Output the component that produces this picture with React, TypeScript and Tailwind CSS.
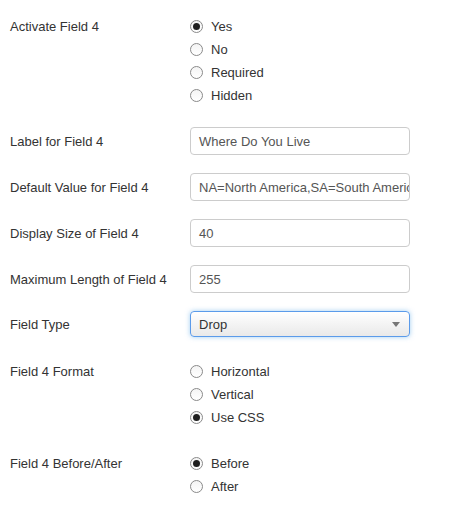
import React from 'react'

type RadioOption = { label: string, checked?: boolean }

function Radio({ label, checked }: RadioOption) {
  return (
    <div className="h-[23px] flex items-center gap-[8px]">
      <span className="w-[13px] h-[13px] rounded-full border border-[#8a8a8a] bg-gradient-to-b from-[#f4f4f4] to-white flex items-center justify-center shrink-0">
        {checked && <span className="w-[7px] h-[7px] rounded-full bg-[#1f1f1f]" />}
      </span>
      <span>{label}</span>
    </div>
  )
}

function RadioRow({ label, options, className }: { label: string, options: RadioOption[], className?: string }) {
  return (
    <div className={`flex ${className ?? ''}`}>
      <div className="w-[180px] h-[23px] flex items-center shrink-0">{label}</div>
      <div className="flex flex-col">
        {options.map((o, idx) => (
          <Radio key={idx} label={o.label} checked={o.checked} />
        ))}
      </div>
    </div>
  )
}

function InputRow({ label, value, className }: { label: string, value: string, className?: string }) {
  return (
    <div className={`flex items-center ${className ?? ''}`}>
      <div className="w-[180px] shrink-0">{label}</div>
      <div className="w-[220px] h-[28px] border border-[#cccccc] rounded-[4px] bg-white px-[8px] flex items-center overflow-hidden whitespace-nowrap text-[#555555]">
        {value}
      </div>
    </div>
  )
}

export default function App() {
  return (
    <div className="w-[463px] h-[514px] bg-white pl-[10px] pt-[15px] text-[13px] text-[#333333] font-['Liberation_Sans',Arial,sans-serif] leading-[15px]">
      <RadioRow
        label="Activate Field 4"
        options={[
          { label: 'Yes', checked: true },
          { label: 'No' },
          { label: 'Required' },
          { label: 'Hidden' },
        ]}
      />
      <InputRow className="mt-[20px]" label="Label for Field 4" value="Where Do You Live" />
      <InputRow className="mt-[18px]" label="Default Value for Field 4" value="NA=North America,SA=South America" />
      <InputRow className="mt-[18px]" label="Display Size of Field 4" value="40" />
      <InputRow className="mt-[18px]" label="Maximum Length of Field 4" value="255" />

      <div className="flex items-center mt-[18px]">
        <div className="w-[180px] shrink-0">Field Type</div>
        <div className="w-[220px] h-[26px] border border-[#5b9bea] rounded-[4px] bg-gradient-to-b from-white to-[#e9e9e9] shadow-[0_0_5px_rgba(102,175,233,0.6)] pl-[8px] pr-[9px] flex items-center justify-between">
          <span>Drop</span>
          <svg width="8" height="5" viewBox="0 0 8 5">
            <path d="M0 0 L8 0 L4 5 Z" fill="#777777" />
          </svg>
        </div>
      </div>

      <RadioRow
        className="mt-[23px]"
        label="Field 4 Format"
        options={[
          { label: 'Horizontal' },
          { label: 'Vertical' },
          { label: 'Use CSS', checked: true },
        ]}
      />
      <RadioRow
        className="mt-[23px]"
        label="Field 4 Before/After"
        options={[
          { label: 'Before', checked: true },
          { label: 'After' },
        ]}
      />
    </div>
  )
}
